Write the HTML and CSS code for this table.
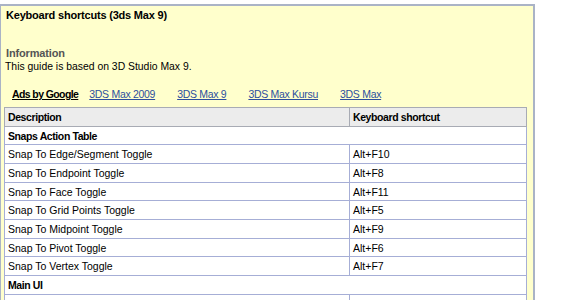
FILE: index.html
```html
<!DOCTYPE html>
<html>
<head>
<meta charset="utf-8">
<link rel="stylesheet" href="styles.css">
</head>
<body>
<div class="box">
  <h1 class="title">Keyboard shortcuts (3ds Max 9)</h1>
  <h2 class="info">Information</h2>
  <p class="guide">This guide is based on 3D Studio Max 9.</p>
  <div class="ads">
    <a class="ads-label" href="#">Ads by Google</a>
    <a href="#">3DS Max 2009</a>
    <a href="#">3DS Max 9</a>
    <a href="#">3DS Max Kursu</a>
    <a href="#">3DS Max</a>
  </div>
  <table class="keys">
    <tr class="head"><th class="c1">Description</th><th>Keyboard shortcut</th></tr>
    <tr><td class="group" colspan="2">Snaps Action Table</td></tr>
    <tr><td>Snap To Edge/Segment Toggle</td><td>Alt+F10</td></tr>
    <tr><td>Snap To Endpoint Toggle</td><td>Alt+F8</td></tr>
    <tr><td>Snap To Face Toggle</td><td>Alt+F11</td></tr>
    <tr><td>Snap To Grid Points Toggle</td><td>Alt+F5</td></tr>
    <tr><td>Snap To Midpoint Toggle</td><td>Alt+F9</td></tr>
    <tr><td>Snap To Pivot Toggle</td><td>Alt+F6</td></tr>
    <tr><td>Snap To Vertex Toggle</td><td>Alt+F7</td></tr>
    <tr><td class="group" colspan="2">Main UI</td></tr>
    <tr><td>Adaptive Degradation Toggle</td><td>O</td></tr>
  </table>
</div>
</body>
</html>
```
FILE: styles.css
```css
html, body {
  margin: 0;
  padding: 0;
  background: #ffffff;
}
body {
  font-family: "Liberation Sans", Arial, sans-serif;
  font-size: 10.5px;
  color: #000;
}
.box {
  margin-top: 4px;
  width: 529px;
  background: #ffffcc;
  border: 2px solid #aab3c6;
  border-left-width: 1px;
  padding: 3px 0 0 3px;
  height: 400px;
}
.title {
  margin: 0;
  padding-left: 2px;
  font-size: 11px;
  letter-spacing: -0.2px;
  font-weight: bold;
  line-height: 13px;
}
.info {
  margin: 25px 0 0 0;
  padding-left: 2px;
  font-size: 11px;
  letter-spacing: -0.15px;
  font-weight: bold;
  line-height: 13px;
  color: #555555;
}
.guide {
  margin: 0;
  padding-left: 1px;
  font-size: 10.4px;
  line-height: 13px;
}
.ads {
  display: flex;
  gap: 22px;
  padding-left: 8px;
  margin-top: 15px;
  line-height: 13px;
}
.ads a {
  color: #2d4f9e;
  text-decoration: underline;
  letter-spacing: -0.3px;
}
.ads a.ads-label {
  color: #000;
  font-weight: bold;
  letter-spacing: -0.6px;
  margin-right: -11px;
}
.keys {
  margin-top: 6px;
  width: 523px;
  border-collapse: collapse;
  border: 1px solid #a8abb4;
  background: #ffffff;
}
.keys td, .keys th {
  border: 1px solid #a6aed6;
  height: 17.68px;
  padding: 0 0 0 3px;
  line-height: 14px;
  text-align: left;
  font-size: 10.5px;
}
.keys th {
  background: #ececec;
  font-weight: bold;
  letter-spacing: -0.4px;
  border-color: #a8abb4;
}
.keys th.c1, .keys td:first-child {
  width: 341px;
}
.keys td.group {
  font-weight: bold;
  letter-spacing: -0.4px;
}
```
